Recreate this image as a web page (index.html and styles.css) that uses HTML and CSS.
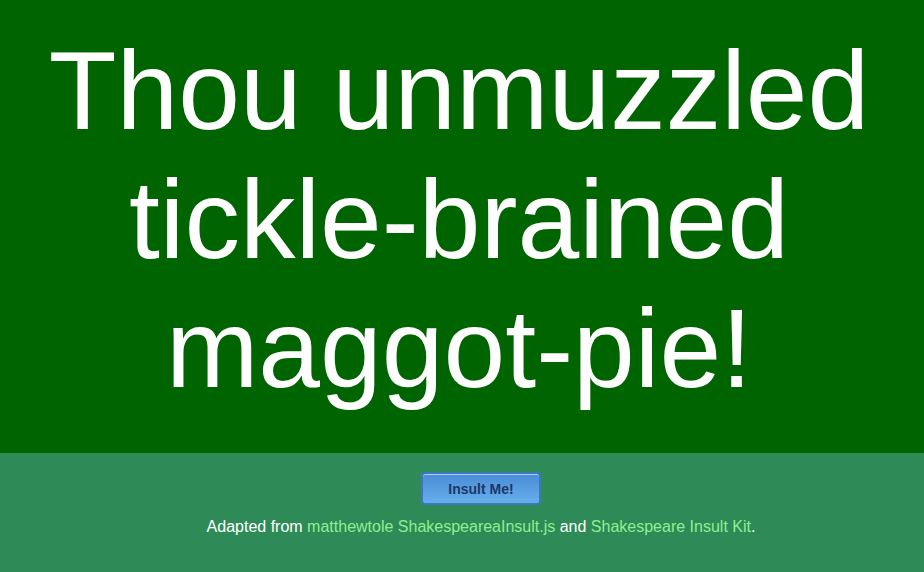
FILE: index.html
```html
<!DOCTYPE html>
<html>
<head>
<meta charset="utf-8">
<link rel="stylesheet" href="styles.css">
</head>
<body>
<main class="page">
  <section class="hero">
    <h1 class="insult">Thou unmuzzled tickle-brained maggot-pie!</h1>
  </section>
  <footer class="foot">
    <button class="btn">Insult Me!</button>
    <p class="credit">Adapted from <a href="#">matthewtole ShakespeareaInsult.js</a> and <a href="#">Shakespeare Insult Kit</a>.</p>
  </footer>
</main>
</body>
</html>
```
FILE: styles.css
```css
html, body { margin: 0; padding: 0; height: 100%; }
body { font-family: "Liberation Sans", Arial, sans-serif; background: #2e8b57; }
.page { display: flex; flex-direction: column; height: 572px; }
.hero {
  background: #006400;
  height: 453px;
  box-sizing: border-box;
  padding: 27px 26px 0 20px;
}
.insult {
  margin: 0;
  color: #fff;
  font-weight: normal;
  font-size: 111px;
  line-height: 129px;
  text-align: center;
}
.foot {
  flex: 1;
  background: #2e8b57;
  display: flex;
  flex-direction: column;
  align-items: center;
  padding: 19px 0 0 38px;
}
.btn {
  width: 120px;
  height: 33px;
  font-family: "Liberation Sans", Arial, sans-serif;
  font-size: 14px;
  font-weight: bold;
  color: #1c3866;
  border: 2px solid #3d77bd;
  border-radius: 4px;
  background: linear-gradient(#4a8bd6, #66afec);
  box-shadow: inset 0 1px 0 #a9d0f4;
  padding: 0;
}
.credit {
  margin: 13px 0 0;
  color: #fff;
  font-size: 16px;
}
.credit a { color: #90ee90; text-decoration: none; }
```
